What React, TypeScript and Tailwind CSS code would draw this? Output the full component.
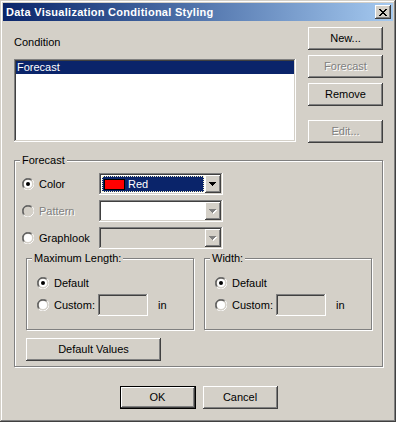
const raised =
  "shadow-[inset_-1px_-1px_0_#404040,inset_1px_1px_0_#ffffff,inset_-2px_-2px_0_#808080,inset_2px_2px_0_#d4d0c8]";
const sunken =
  "shadow-[inset_-1px_-1px_0_#ffffff,inset_1px_1px_0_#808080,inset_-2px_-2px_0_#d4d0c8,inset_2px_2px_0_#404040]";
const etched = "border border-[#808080] shadow-[inset_1px_1px_0_#ffffff,1px_1px_0_#ffffff]";
const disabledText = "text-[#808080] [text-shadow:1px_1px_0_#ffffff]";

function Button({
  label,
  width = "w-[75px]",
  disabled = false,
}: {
  label: string;
  width?: string;
  disabled?: boolean;
}) {
  return (
    <div
      className={`${width} h-[23px] flex items-center justify-center bg-[#d4d0c8] ${raised} ${
        disabled ? disabledText : "text-black"
      }`}
    >
      {label}
    </div>
  );
}

function Radio({ checked = false, disabled = false }: { checked?: boolean; disabled?: boolean }) {
  return (
    <svg width="12" height="12" viewBox="0 0 12 12" className="shrink-0">
      <path d="M1.76 10.24 A6 6 0 0 1 10.24 1.76" fill="none" stroke="#808080" strokeWidth="1" />
      <path d="M10.24 1.76 A6 6 0 0 1 1.76 10.24" fill="none" stroke="#ffffff" strokeWidth="1" />
      <path d="M2.46 9.54 A5 5 0 0 1 9.54 2.46" fill="none" stroke="#404040" strokeWidth="1" />
      <path d="M9.54 2.46 A5 5 0 0 1 2.46 9.54" fill="none" stroke="#d4d0c8" strokeWidth="1" />
      <circle cx="6" cy="6" r="4" fill={disabled ? "#d4d0c8" : "#ffffff"} />
      {checked && <circle cx="6" cy="6" r="2" fill="#000000" />}
    </svg>
  );
}

function Arrow({ disabled = false }: { disabled?: boolean }) {
  return (
    <svg width="8" height="5" viewBox="0 0 8 5" shapeRendering="crispEdges">
      {disabled && <polygon points="1,1 8,1 4.5,5" fill="#ffffff" />}
      <polygon points="0,0 7,0 3.5,4" fill={disabled ? "#808080" : "#000000"} />
    </svg>
  );
}

function Combo({
  disabled = false,
  white = true,
  children,
}: {
  disabled?: boolean;
  white?: boolean;
  children?: React.ReactNode;
}) {
  return (
    <div className={`w-[124px] h-[22px] p-[2px] flex ${sunken} ${white ? "bg-white" : "bg-[#d4d0c8]"}`}>
      <div className="flex-1 p-[1px] min-w-0">{children}</div>
      <div className={`w-[16px] h-[18px] flex items-center justify-center bg-[#d4d0c8] ${raised}`}>
        <Arrow disabled={disabled} />
      </div>
    </div>
  );
}

function GroupBox({
  label,
  className,
  children,
}: {
  label: string;
  className: string;
  children: React.ReactNode;
}) {
  return (
    <div className={`relative ${etched} ${className}`}>
      <span className="absolute -top-[7px] left-[5px] px-[2px] bg-[#d4d0c8] leading-[13px]">{label}</span>
      {children}
    </div>
  );
}

function RadioRow({
  label,
  checked,
  disabled,
  labelWidth,
  children,
}: {
  label: string;
  checked?: boolean;
  disabled?: boolean;
  labelWidth: string;
  children?: React.ReactNode;
}) {
  return (
    <div className="flex items-center h-[22px]">
      <div className={`flex items-center ${labelWidth}`}>
        <Radio checked={checked} disabled={disabled} />
        <span className={`ml-[5px] ${disabled ? disabledText : ""}`}>{label}</span>
      </div>
      {children}
    </div>
  );
}

function SizeGroup({ label, className = "" }: { label: string; className?: string }) {
  return (
    <GroupBox label={label} className={`w-[168px] h-[72px] pt-[13px] pl-[10px] ${className}`}>
      <RadioRow label="Default" checked labelWidth="w-[61px]" />
      <RadioRow label="Custom:" labelWidth="w-[61px]">
        <div className={`w-[50px] h-[22px] bg-[#d4d0c8] ${sunken}`} />
        <span className="ml-[10px]">in</span>
      </RadioRow>
    </GroupBox>
  );
}

export default function App() {
  return (
    <div className="w-[396px] h-[422px] bg-[#d4d0c8] p-[3px] text-[11px] leading-[13px] text-black font-['Liberation_Sans',Arial,sans-serif] shadow-[inset_-1px_-1px_0_#404040,inset_1px_1px_0_#d4d0c8,inset_-2px_-2px_0_#808080,inset_2px_2px_0_#ffffff] select-none">
      <div className="h-[18px] flex items-center justify-between bg-gradient-to-r from-[#0a246a] to-[#a6caf0] pl-[3px] pr-[2px]">
        <span className="font-bold text-white tracking-[0.27px]">Data Visualization Conditional Styling</span>
        <div className={`w-[16px] h-[14px] flex items-center justify-center bg-[#d4d0c8] ${raised}`}>
          <svg width="8" height="7" viewBox="0 0 8 7" shapeRendering="crispEdges">
            <path d="M0 0h2v1h-2zM6 0h2v1h-2zM1 1h2v1h-2zM5 1h2v1h-2zM2 2h4v1h-4zM3 3h2v1h-2zM2 4h4v1h-4zM1 5h2v1h-2zM5 5h2v1h-2zM0 6h2v1h-2zM6 6h2v1h-2z" fill="#000" />
          </svg>
        </div>
      </div>

      <div className="pl-[11px]">
        <div className="flex mt-[6px]">
          <div className="w-[282px]">
            <div className="mt-[9px]">Condition</div>
            <div className={`mt-[10px] h-[83px] bg-white p-[2px] ${sunken}`}>
              <div className="h-[13px] bg-[#0a246a] text-white pl-[1px]">Forecast</div>
            </div>
          </div>
          <div className="ml-[12px] flex flex-col">
            <Button label="New..." />
            <div className="mt-[5px]">
              <Button label="Forecast" disabled />
            </div>
            <div className="mt-[5px]">
              <Button label="Remove" />
            </div>
            <div className="mt-[14px]">
              <Button label="Edit..." disabled />
            </div>
          </div>
        </div>

        <GroupBox label="Forecast" className="mt-[17px] w-[369px] h-[207px] pt-[12px] pl-[7px]">
          <div className="flex flex-col gap-[5px]">
            <RadioRow label="Color" checked labelWidth="w-[77px]">
              <Combo>
                <div className="h-full bg-[#0a246a] border border-dotted border-[#f3eec4] flex items-center text-white">
                  <div className="ml-[1px] w-[21px] h-[11px] bg-[#ff0000] border border-black" />
                  <span className="ml-[3px]">Red</span>
                </div>
              </Combo>
            </RadioRow>
            <RadioRow label="Pattern" disabled labelWidth="w-[77px]">
              <Combo disabled />
            </RadioRow>
            <RadioRow label="Graphlook" labelWidth="w-[77px]">
              <Combo disabled white={false} />
            </RadioRow>
          </div>

          <div className="ml-[4px]">
            <div className="flex mt-[9px]">
              <SizeGroup label="Maximum Length:" />
              <SizeGroup label="Width:" className="ml-[10px]" />
            </div>
            <div className="mt-[8px]">
              <Button label="Default Values" width="w-[135px]" />
            </div>
          </div>
        </GroupBox>
      </div>

      <div className="flex justify-center gap-[7px] mt-[19px] pl-[1px]">
        <div className="w-[76px] h-[23px] border border-black">
          <div className={`w-full h-full flex items-center justify-center bg-[#d4d0c8] ${raised}`}>OK</div>
        </div>
        <Button label="Cancel" />
      </div>
    </div>
  );
}
